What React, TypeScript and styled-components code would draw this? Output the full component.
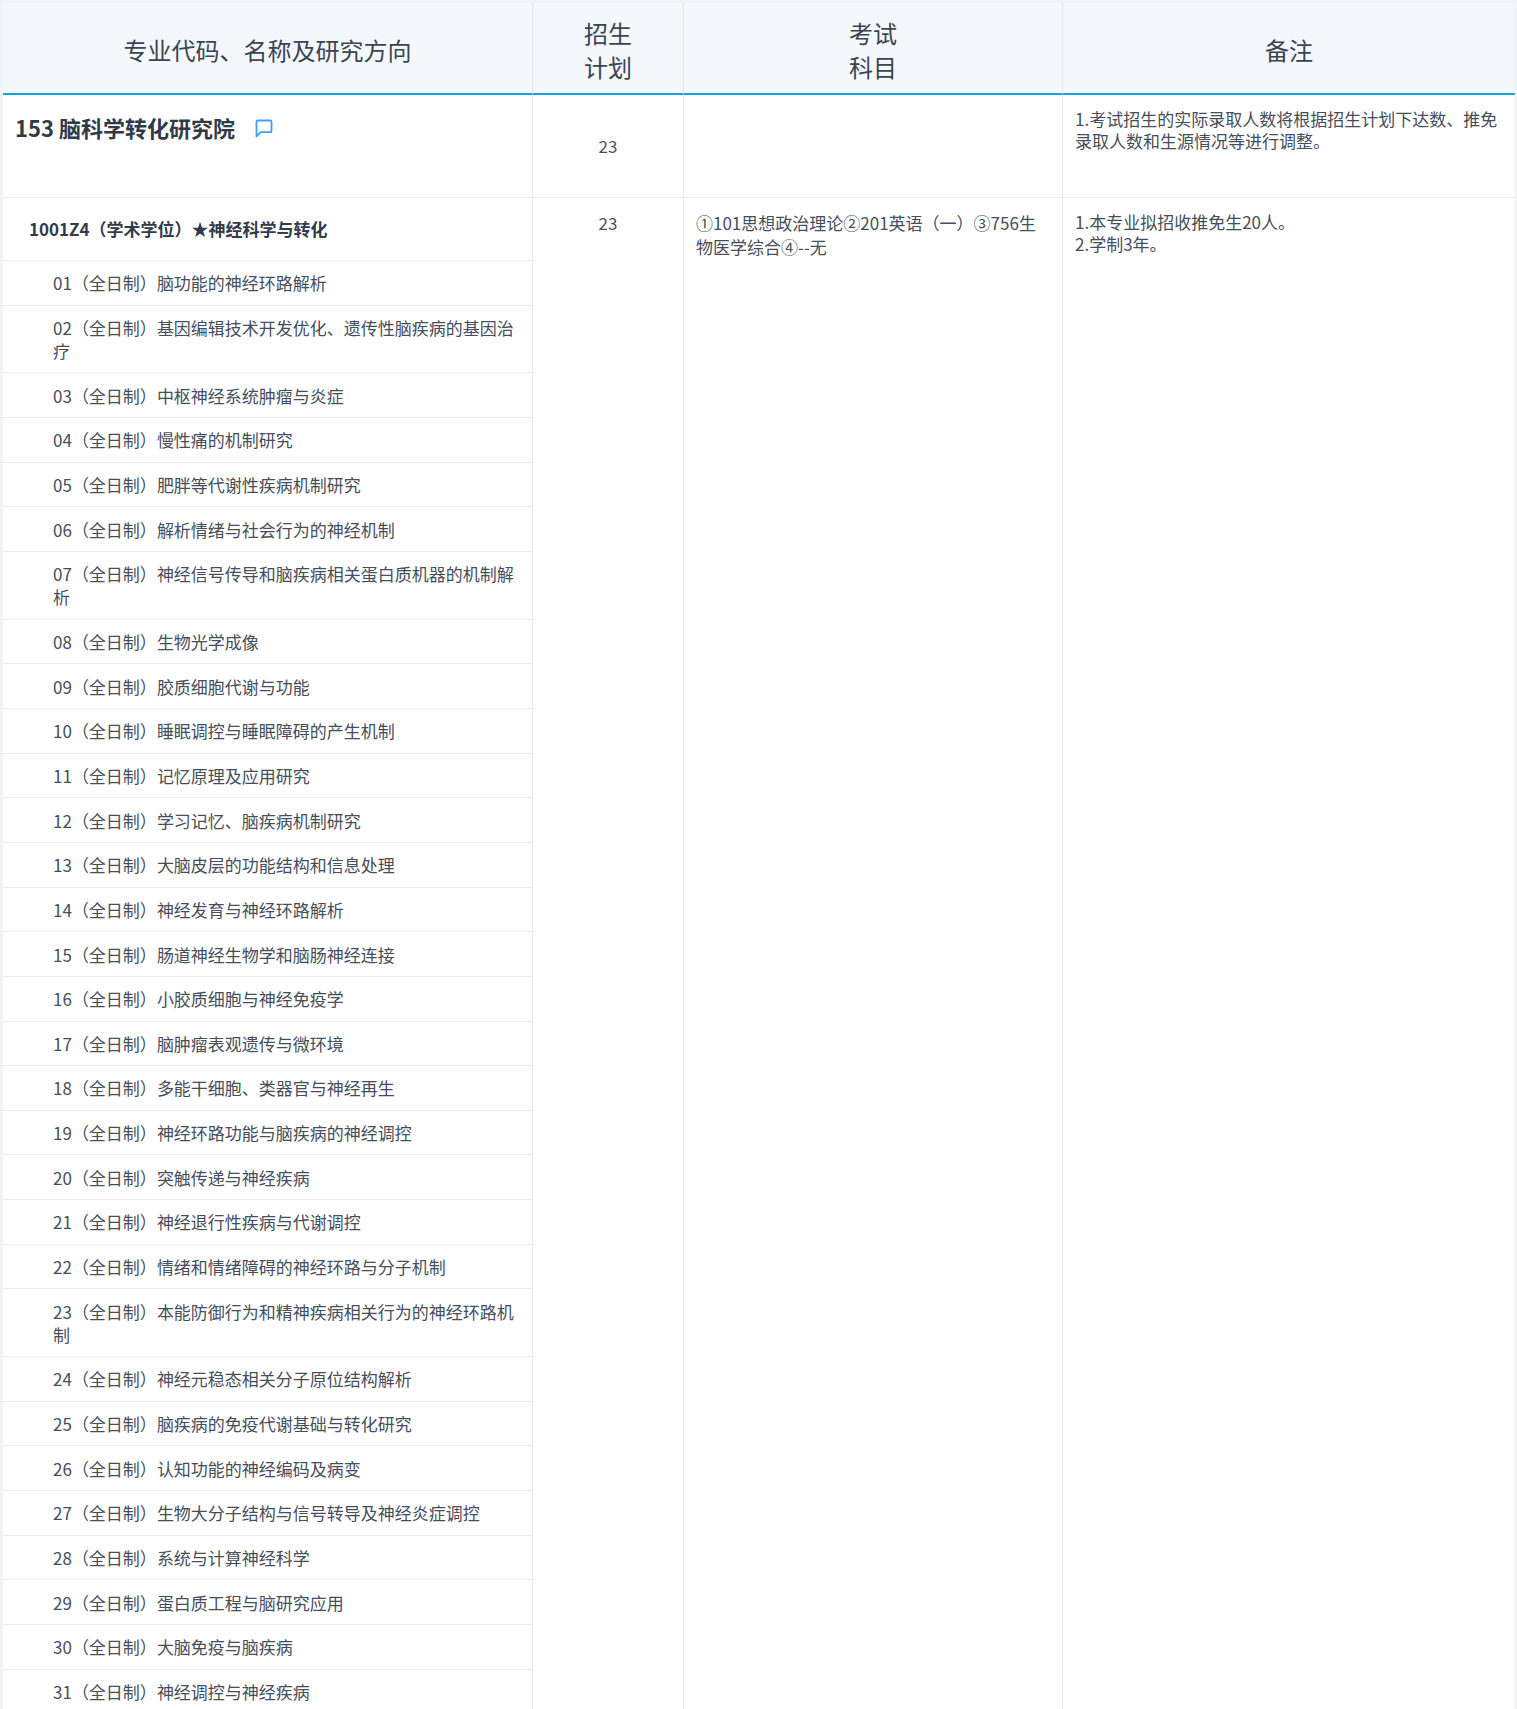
import React from "react";
import styled, { createGlobalStyle } from "styled-components";

const GlobalStyle = createGlobalStyle`
  body {
    margin: 0;
    background: #f1f3f6;
    font-family: "Noto Sans CJK SC", "Noto Sans", sans-serif;
    color: #464e5b;
  }
`;

const directions: string[] = [
  "脑功能的神经环路解析",
  "基因编辑技术开发优化、遗传性脑疾病的基因治疗",
  "中枢神经系统肿瘤与炎症",
  "慢性痛的机制研究",
  "肥胖等代谢性疾病机制研究",
  "解析情绪与社会行为的神经机制",
  "神经信号传导和脑疾病相关蛋白质机器的机制解析",
  "生物光学成像",
  "胶质细胞代谢与功能",
  "睡眠调控与睡眠障碍的产生机制",
  "记忆原理及应用研究",
  "学习记忆、脑疾病机制研究",
  "大脑皮层的功能结构和信息处理",
  "神经发育与神经环路解析",
  "肠道神经生物学和脑肠神经连接",
  "小胶质细胞与神经免疫学",
  "脑肿瘤表观遗传与微环境",
  "多能干细胞、类器官与神经再生",
  "神经环路功能与脑疾病的神经调控",
  "突触传递与神经疾病",
  "神经退行性疾病与代谢调控",
  "情绪和情绪障碍的神经环路与分子机制",
  "本能防御行为和精神疾病相关行为的神经环路机制",
  "神经元稳态相关分子原位结构解析",
  "脑疾病的免疫代谢基础与转化研究",
  "认知功能的神经编码及病变",
  "生物大分子结构与信号转导及神经炎症调控",
  "系统与计算神经科学",
  "蛋白质工程与脑研究应用",
  "大脑免疫与脑疾病",
  "神经调控与神经疾病",
];

const Page = styled.div`
  padding: 3px 2px 0 3px;
`;

const Table = styled.div`
  display: grid;
  grid-template-columns: 530px 151px 379px 452px;
  background: #fff;
`;

const HeadCell = styled.div<{ $last?: boolean }>`
  box-sizing: border-box;
  height: 92px;
  padding-top: 4px;
  display: flex;
  align-items: center;
  justify-content: center;
  text-align: center;
  background: #f4f7fc;
  color: #3b4452;
  font-size: 24px;
  line-height: 34px;
  border-bottom: 2px solid #12a3e3;
  border-right: ${(p) => (p.$last ? "none" : "1px solid #e4e9ef")};
`;

const Cell = styled.div<{ $last?: boolean; $bottom?: boolean }>`
  box-sizing: border-box;
  border-right: ${(p) => (p.$last ? "none" : "1px solid #e6ebf0")};
  border-bottom: ${(p) => (p.$bottom ? "1px solid #e8ecf0" : "none")};
  font-size: 17px;
  line-height: 22px;
`;

const DeptCell = styled(Cell)`
  height: 103px;
  padding: 17px 0 0 12px;
`;

const DeptName = styled.span`
  font-size: 22px;
  line-height: 30px;
  font-weight: 700;
  color: #323a47;
`;

const ChatIcon = styled.svg`
  width: 20px;
  height: 20px;
  margin-left: 19px;
  vertical-align: -1px;
`;

const PlanCell = styled(Cell)<{ $middle?: boolean }>`
  display: flex;
  justify-content: center;
  align-items: ${(p) => (p.$middle ? "center" : "flex-start")};
  padding-top: ${(p) => (p.$middle ? "0" : "14px")};
  color: #4b5361;
`;

const TextCell = styled(Cell)<{ $lh?: number; $pr?: number }>`
  padding: 13px ${(p) => p.$pr ?? 12}px 0 12px;
  line-height: ${(p) => p.$lh ?? 22}px;
  color: #464e5b;
`;

const MajorList = styled.div`
  display: flex;
  flex-direction: column;
  border-right: 1px solid #e6ebf0;
`;

const MajorTitle = styled.div`
  padding: 20px 0 20px 26px;
  font-size: 17px;
  line-height: 22px;
  font-weight: 700;
  color: #333b48;
  border-bottom: 1px solid #e8ecf0;
`;

const DirRow = styled.div`
  padding: 10.33px 12px 10.33px 50px;
  font-size: 17px;
  line-height: 23px;
  color: #464e5b;
  border-bottom: 1px solid #e8ecf0;
`;

export default function App() {
  return (
    <Page>
      <GlobalStyle />
      <Table>
        <HeadCell>专业代码、名称及研究方向</HeadCell>
        <HeadCell>
          招生
          <br />
          计划
        </HeadCell>
        <HeadCell>
          考试
          <br />
          科目
        </HeadCell>
        <HeadCell $last>备注</HeadCell>

        <DeptCell $bottom>
          <DeptName>153 脑科学转化研究院</DeptName>
          <ChatIcon viewBox="0 0 24 24" fill="none" stroke="#409eff" strokeWidth="2.2" strokeLinejoin="round">
            <path d="M3 22V4.5A1.5 1.5 0 0 1 4.5 3h15A1.5 1.5 0 0 1 21 4.5v11a1.5 1.5 0 0 1-1.5 1.5H8z" />
          </ChatIcon>
        </DeptCell>
        <PlanCell $middle $bottom>
          23
        </PlanCell>
        <Cell $bottom />
        <TextCell $last $bottom>
          1.考试招生的实际录取人数将根据招生计划下达数、推免录取人数和生源情况等进行调整。
        </TextCell>

        <MajorList>
          <MajorTitle>1001Z4（学术学位）★神经科学与转化</MajorTitle>
          {directions.map((d, i) => (
            <DirRow key={i}>
              {String(i + 1).padStart(2, "0")}（全日制）{d}
            </DirRow>
          ))}
        </MajorList>
        <PlanCell>23</PlanCell>
        <TextCell $lh={24} $pr={19}>
          ①101思想政治理论②201英语（一）③756生物医学综合④--无
        </TextCell>
        <TextCell $last>
          1.本专业拟招收推免生20人。
          <br />
          2.学制3年。
        </TextCell>
      </Table>
    </Page>
  );
}
